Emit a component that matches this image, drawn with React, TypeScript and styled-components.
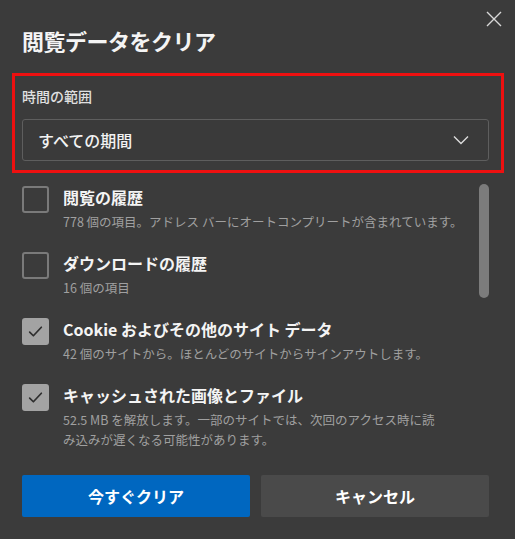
import React, { useState } from 'react';
import styled, { createGlobalStyle } from 'styled-components';

const GlobalStyle = createGlobalStyle`
  html, body {
    margin: 0;
    padding: 0;
    background: #3b3b3b;
  }
  * {
    box-sizing: border-box;
  }
`;

const FONT = `"Noto Sans CJK JP", "Noto Sans", sans-serif`;

const Dialog = styled.div`
  position: relative;
  width: 515px;
  height: 539px;
  background: #3b3b3b;
  font-family: ${FONT};
  color: #ffffff;
  overflow: hidden;
`;

const CloseButton = styled.button`
  position: absolute;
  top: 9px;
  right: 11px;
  width: 20px;
  height: 20px;
  padding: 0;
  border: none;
  background: transparent;
  cursor: pointer;
  display: flex;
  align-items: center;
  justify-content: center;
`;

const Title = styled.h1`
  margin: 0;
  padding: 24px 22px 0;
  font-size: 22px;
  font-weight: 700;
  line-height: 32px;
  letter-spacing: -0.5px;
  color: #f4f4f4;
`;

const RangeSection = styled.div`
  margin: 17px 11px 0 12px;
  border: 3px solid #ee1010;
  padding: 10px 12px 9px 7px;
`;

const RangeLabel = styled.div`
  font-size: 14px;
  font-weight: 500;
  line-height: 20px;
  color: #e0e0e0;
  margin-bottom: 13px;
`;

const Select = styled.div`
  height: 42px;
  border: 1px solid #5e5e5e;
  border-radius: 3px;
  background: #3a3a3a;
  display: flex;
  align-items: center;
  justify-content: space-between;
  padding: 0 19px 0 15px;
  font-size: 16px;
  font-weight: 500;
  color: #f2f2f2;
`;

const ListArea = styled.div`
  position: relative;
  height: 292px;
  padding: 13px 40px 0 22px;
  overflow: hidden;
`;

const ScrollThumb = styled.div`
  position: absolute;
  top: 11px;
  right: 26px;
  width: 10px;
  height: 114px;
  border-radius: 5px;
  background: #7c7c7c;
`;

const Item = styled.div`
  display: flex;
  align-items: flex-start;
  gap: 14px;
  min-height: 66px;
`;

const Box = styled.div<{ $checked: boolean }>`
  flex: 0 0 auto;
  width: 27px;
  height: 27px;
  border-radius: 3px;
  border: 2px solid ${p => (p.$checked ? '#a3a3a3' : '#7a7a7a')};
  background: ${p => (p.$checked ? '#a3a3a3' : 'transparent')};
  display: flex;
  align-items: center;
  justify-content: center;
`;

const ItemText = styled.div`
  padding-top: 0;
`;

const ItemTitle = styled.div`
  font-size: 16px;
  font-weight: 700;
  line-height: 22px;
  color: #f4f4f4;
`;

const ItemSub = styled.div`
  margin-top: 4px;
  font-size: 12.5px;
  line-height: 20px;
  color: #a0a0a0;
  white-space: pre-line;
`;

const Footer = styled.div`
  display: grid;
  grid-template-columns: 228px 228px;
  gap: 11px;
  padding: 10px 0 0 22px;
`;

const Button = styled.button<{ $primary?: boolean }>`
  height: 42px;
  border: none;
  border-radius: 2px;
  font-family: ${FONT};
  font-size: 16px;
  font-weight: 700;
  color: #ffffff;
  background: ${p => (p.$primary ? '#0067c0' : '#4a4a4a')};
  cursor: pointer;
`;

const items = [
  { title: '閲覧の履歴', sub: '778 個の項目。アドレス バーにオートコンプリートが含まれています。', checked: false },
  { title: 'ダウンロードの履歴', sub: '16 個の項目', checked: false },
  { title: 'Cookie およびその他のサイト データ', sub: '42 個のサイトから。ほとんどのサイトからサインアウトします。', checked: true },
  {
    title: 'キャッシュされた画像とファイル',
    sub: '52.5 MB を解放します。一部のサイトでは、次回のアクセス時に読\nみ込みが遅くなる可能性があります。',
    checked: true,
  },
];

const Check = () => (
  <svg width="17" height="17" viewBox="0 0 16 16" fill="none">
    <path d="M2.5 8.5 L6 12 L13.5 4" stroke="#2e2e2e" strokeWidth="1.6" strokeLinecap="round" strokeLinejoin="round" />
  </svg>
);

const App: React.FC = () => {
  const [state, setState] = useState(items.map(i => i.checked));

  const toggle = (idx: number) => {
    setState(s => s.map((v, i) => (i === idx ? !v : v)));
  };

  return (
    <Dialog>
      <GlobalStyle />
      <CloseButton aria-label="閉じる">
        <svg width="16" height="16" viewBox="0 0 16 16">
          <path d="M1 1 L15 15 M15 1 L1 15" stroke="#d8d8d8" strokeWidth="1.4" />
        </svg>
      </CloseButton>
      <Title>閲覧データをクリア</Title>
      <RangeSection>
        <RangeLabel>時間の範囲</RangeLabel>
        <Select>
          すべての期間
          <svg width="16" height="10" viewBox="0 0 16 10">
            <path d="M1 1.5 L8 8.5 L15 1.5" stroke="#dcdcdc" strokeWidth="1.4" fill="none" />
          </svg>
        </Select>
      </RangeSection>
      <ListArea>
        {items.map((item, idx) => (
          <Item key={item.title} onClick={() => toggle(idx)}>
            <Box $checked={state[idx]}>{state[idx] && <Check />}</Box>
            <ItemText>
              <ItemTitle>{item.title}</ItemTitle>
              <ItemSub>{item.sub}</ItemSub>
            </ItemText>
          </Item>
        ))}
        <ScrollThumb />
      </ListArea>
      <Footer>
        <Button $primary>今すぐクリア</Button>
        <Button>キャンセル</Button>
      </Footer>
    </Dialog>
  );
};

export default App;
